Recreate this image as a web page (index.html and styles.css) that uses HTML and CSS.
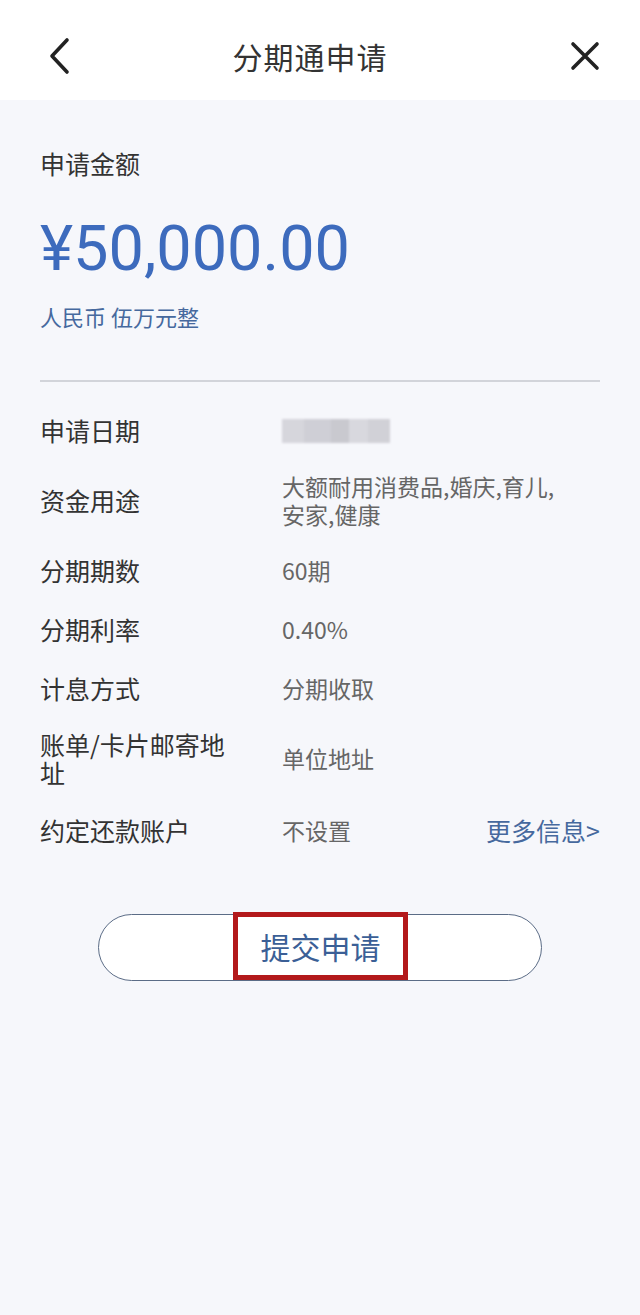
FILE: index.html
```html
<!DOCTYPE html>
<html lang="zh-CN">
<head>
<meta charset="utf-8">
<title>分期通申请</title>
<link rel="stylesheet" href="styles.css">
</head>
<body>
<header class="nav">
  <div class="nav-left">
    <svg class="icon" width="30" height="40" viewBox="0 0 30 40"><path d="M21 4 L6 20 L21 36" fill="none" stroke="#222" stroke-width="3.6" stroke-linecap="round" stroke-linejoin="round"/></svg>
  </div>
  <h1 class="nav-title">分期通申请</h1>
  <div class="nav-right">
    <svg class="icon" width="30" height="30" viewBox="0 0 30 30"><path d="M3 3 L27 27 M27 3 L3 27" fill="none" stroke="#222" stroke-width="3.6" stroke-linecap="round"/></svg>
  </div>
</header>

<main class="content">
  <section class="amount-block">
    <div class="amount-label">申请金额</div>
    <div class="amount-value">¥50,000.00</div>
    <div class="amount-words">人民币 伍万元整</div>
  </section>

  <hr class="divider">

  <section class="details">
    <div class="row">
      <div class="label">申请日期</div>
      <div class="value"><span class="blurred"></span></div>
    </div>
    <div class="row">
      <div class="label">资金用途</div>
      <div class="value multi"><span class="line">大额耐用消费品,婚庆,育儿,</span><span class="line">安家,健康</span></div>
    </div>
    <div class="row">
      <div class="label">分期期数</div>
      <div class="value">60期</div>
    </div>
    <div class="row">
      <div class="label">分期利率</div>
      <div class="value">0.40%</div>
    </div>
    <div class="row">
      <div class="label">计息方式</div>
      <div class="value">分期收取</div>
    </div>
    <div class="row">
      <div class="label wrap">账单/卡片邮寄地址</div>
      <div class="value">单位地址</div>
    </div>
    <div class="row last">
      <div class="label">约定还款账户</div>
      <div class="value">不设置</div>
      <a class="more">更多信息&gt;</a>
    </div>
  </section>

  <div class="actions">
    <button class="submit">
      <span class="submit-text">提交申请</span>
      <span class="highlight"></span>
    </button>
  </div>
</main>
</body>
</html>
```

FILE: styles.css
```css
* { box-sizing: border-box; }

html, body {
  margin: 0;
  padding: 0;
}

body {
  background: #f6f7fb;
  font-family: "Noto Sans CJK SC", "Noto Sans", sans-serif;
  color: #333;
  min-height: 1315px;
}

.nav {
  height: 100px;
  padding-top: 12px;
  background: #ffffff;
  display: grid;
  grid-template-columns: 1fr auto 1fr;
  align-items: center;
}

.nav-left {
  padding-left: 46px;
  display: flex;
  align-items: center;
}

.nav-right {
  justify-self: end;
  padding-right: 40px;
  display: flex;
  align-items: center;
}

.icon { display: block; }

.nav-title {
  margin: 0 0 0 -20px;
  font-size: 30px;
  font-weight: 400;
  color: #333;
  letter-spacing: 1px;
  line-height: 40px;
}

.content {
  padding: 46px 40px 0;
}

.amount-label {
  font-size: 25px;
  line-height: 34px;
  color: #333;
}

.amount-value {
  margin-top: 31px;
  font-family: Roboto, "Noto Sans", sans-serif;
  font-size: 63px;
  line-height: 76px;
  color: #3d6bbd;
}

.amount-words {
  margin-top: 14px;
  font-size: 22px;
  line-height: 30px;
  color: #46699e;
}

.divider {
  margin: 49px 0 0;
  border: 0;
  border-top: 2px solid #d2d4da;
  height: 0;
}

.details {
  margin-top: 31px;
  display: flex;
  flex-direction: column;
  gap: 25px;
}

.row {
  display: flex;
  align-items: center;
}

.row.last {
  margin-top: 2px;
}

.label {
  width: 242px;
  flex: none;
  padding-right: 42px;
  font-size: 25px;
  line-height: 34px;
  color: #333;
}

.label.wrap {
  line-height: 28px;
}

.value {
  flex: 1;
  font-size: 23px;
  line-height: 34px;
  color: #666;
}

.value.multi {
  display: flex;
  flex-direction: column;
}

.value.multi .line {
  display: block;
  line-height: 28px;
  height: 28px;
}

.blurred {
  display: block;
  width: 108px;
  height: 24px;
  margin-top: 2px;
  background:
    linear-gradient(90deg, #d6d6dc 0 20%, #cfcfd6 20% 45%, #c9c9cf 45% 62%, #d8d8de 62% 80%, #d1d1d7 80% 100%);
  filter: blur(1.2px);
}

.more {
  font-size: 25px;
  line-height: 34px;
  color: #46699e;
}

.actions {
  margin-top: 67px;
  display: flex;
  justify-content: center;
}

.submit {
  position: relative;
  width: 444px;
  height: 67px;
  margin-left: -1px;
  border: 1.5px solid #5b6c86;
  border-radius: 34px;
  background: #ffffff;
  font-family: "Noto Sans CJK SC", "Noto Sans", sans-serif;
  display: flex;
  align-items: center;
  justify-content: center;
  padding: 0 0 4px;
}

.submit-text {
  font-size: 30px;
  line-height: 40px;
  color: #3b5f96;
  margin-left: 2px;
}

.highlight {
  position: absolute;
  left: 134px;
  top: -3px;
  width: 175px;
  height: 68px;
  border: 5px solid #b3191b;
}
```
